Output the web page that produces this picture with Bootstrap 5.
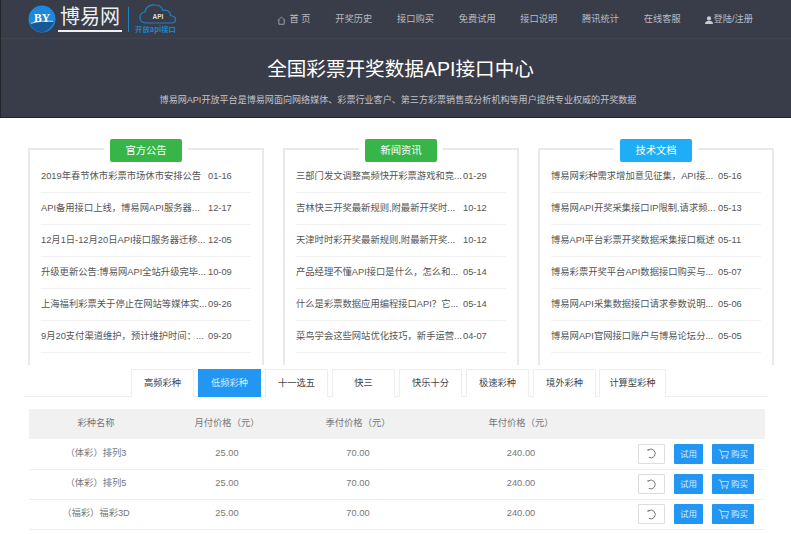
<!DOCTYPE html>
<html lang="zh"><head><meta charset="utf-8"><title>博易网API</title>
<link href="https://cdn.jsdelivr.net/npm/bootstrap@5.3.0/dist/css/bootstrap.min.css" rel="stylesheet">
<style>
html,body{height:534px;overflow:hidden;background:#fff}
body{font-family:"Liberation Sans","Noto Sans CJK SC",sans-serif;font-size:9.3px;color:#555}
.hero{height:118px;background:#393d49;border-bottom:1px solid #23252c;border-left:1px solid #23252c}
.topbar{height:39px;border-bottom:1px solid #41454f;padding:0 38px 0 27px}
.logo-cn{font-size:20px;line-height:20px;color:#eee;border-bottom:2px solid #eee;padding:0 2px 3px;margin-left:2px}
.logo-rule{width:1px;height:25px;background:#1e82c9;margin:0 6px}
.topnav a{color:#b8bbc2;text-decoration:none;font-size:9.25px;white-space:nowrap}
.topnav{gap:24.7px;margin-left:auto;padding-top:2px}
.hero-title{color:#fff;font-size:19.6px;line-height:24px;margin:18px 0 13px;padding-left:9px;font-weight:400}
.hero-sub{color:#c2c4c9;font-size:9.07px;line-height:12px;margin:0;padding-left:4px}
.panels{height:247px;overflow:hidden;padding:20px 17px 0 28px;gap:19px}
.panel{width:236px;height:240px;border:2px solid #e9e9e9;border-bottom:0;margin-top:10px;padding:0 11px;position:relative}
.panel-tag{position:absolute;top:-11px;left:80px;width:72px;height:23px;line-height:23px;border-radius:2px;text-align:center;color:#fff;font-size:10.3px;box-shadow:0 0 0 6px #fff}
.tag-green{background:#38b549}.tag-blue{background:#1eaef5}
.panel ul{margin:11px 0 0;padding:0;list-style:none}
.panel li{height:32px;padding-top:1px;border-bottom:1px solid #f1f1f1;display:flex;align-items:center;white-space:nowrap;color:#555}
.panel li span:first-child{width:167px;flex:none}
.panel li span:last-child{width:24px;flex:none}
.tabbar{margin:4px 23px 0 24px;height:28px;border-bottom:1px solid #eee;padding-left:107px;gap:4px;flex-wrap:nowrap}
.tabbar .nav-link{width:63px;height:28px;padding:0;line-height:27px;text-align:center;font-size:9.25px;color:#444;background:#fff;border:1px solid #eee;border-bottom:0;border-radius:0;margin:0}
.tabbar .nav-link.active{background:#2296f3;color:#d8ecff;border-color:#2296f3}
.tabbar .nav-item:nth-child(8) .nav-link{width:67px}
.tabbar .nav-item:nth-child(7) .nav-link{width:63px;margin-right:-1px}
.price-wrap{margin:12px 26px 0 29px}
.price{width:736px;margin:0;table-layout:fixed;font-size:9.3px}
.price th,.price td{height:30px;padding:0;text-align:center;vertical-align:middle;border-bottom:1px solid #eee;color:#777;font-weight:400;box-shadow:none;background:transparent}
.price thead th{background:#f1f1f1;border-bottom:0;color:#777}
.col-a{width:134px}.col-b{width:128px}.col-c{width:134px}.col-d{width:192px}
.ops{display:flex;justify-content:flex-end;align-items:center;padding-right:11px;gap:9px}
.btn-tiny{height:20px;padding:0;font-size:8.5px;line-height:18px;border-radius:1px;display:flex;align-items:center;justify-content:center;gap:2px}
.btn-re{width:27px;background:#fff;border:1px solid #ddd}
.btn-try{width:29px;background:#2296f3;color:#d8ecff;border:0}
.btn-buy{width:42px;background:#2296f3;color:#d8ecff;border:0}
</style></head><body>
<header class="hero text-center">
 <nav class="topbar d-flex align-items-center">
  <div class="d-flex align-items-center">
   <svg width="28" height="28" viewBox="0 0 29 29"><circle cx="14.500" cy="14.500" r="14" fill="#1e88dc"/><path d="M2 19c6-3 15-4 25-2-3 7-8 11-13 11-6 0-10-4-12-9z" fill="#155a96"/><path d="M3 19c7-2 15-3 23-2" stroke="#fff" stroke-width=".8" fill="none"/><text x="14.500" y="18" text-anchor="middle" font-family="Liberation Serif" font-weight="700" font-size="12" fill="#fff">BY</text></svg>
   <span class="logo-cn">博易网</span>
   <span class="logo-rule"></span>
   <svg width="46" height="30" viewBox="0 0 46 30"><path d="M11 19c-4 0-6-2.500-6-5.500 0-3 2-5 5-5.500 1-5 5-7.500 10-7 4 0 7 2 8 5.500 1-.5 2.500-.5 4 0 2.500 1 3.500 3 3.500 5 3 .5 5 2 5 4 0 2.500-2 3.500-4 3.500z" fill="none" stroke="#1e82c9" stroke-width="1.200"/><text x="23" y="15" text-anchor="middle" font-family="Liberation Sans" font-weight="700" font-size="6.500" fill="#ddd">API</text><text x="0" y="28" font-family="Noto Sans CJK SC" font-weight="700" font-size="7.400" fill="#1e82c9">开放api接口</text></svg>
  </div>
  <div class="topnav d-flex align-items-center">
   <a href="#" class="d-flex align-items-center gap-1"><svg width="9" height="9" viewBox="0 0 12 12" fill="none" stroke="#b8bbc2"><path d="M1 6l5-4.500L11 6M2.500 5v6h7V5"/></svg>首 页</a>
   <a href="#">开奖历史</a><a href="#">接口购买</a><a href="#">免费试用</a><a href="#">接口说明</a><a href="#">腾讯统计</a><a href="#">在线客服</a>
   <a href="#" class="d-flex align-items-center"><svg width="8" height="8" viewBox="0 0 10 10" fill="#c8cad0"><circle cx="5" cy="3" r="2.600"/><path d="M0 10c0-3 2-4 5-4s5 1 5 4z"/></svg>登陆/注册</a>
  </div>
 </nav>
 <h1 class="hero-title">全国彩票开奖数据API接口中心</h1>
 <p class="hero-sub">博易网API开放平台是博易网面向网络媒体、彩票行业客户、第三方彩票销售或分析机构等用户提供专业权威的开奖数据</p>
</header>
<section class="panels d-flex">
 <div class="panel"><div class="panel-tag tag-green">官方公告</div><ul>
  <li><span>2019年春节休市彩票市场休市安排公告</span><span>01-16</span></li>
  <li><span>API备用接口上线，博易网API服务器...</span><span>12-17</span></li>
  <li><span>12月1日-12月20日API接口服务器迁移...</span><span>12-05</span></li>
  <li><span>升级更新公告:博易网API全站升级完毕...</span><span>10-09</span></li>
  <li><span>上海福利彩票关于停止在网站等媒体实...</span><span>09-26</span></li>
  <li><span>9月20支付渠道维护，预计维护时间：...</span><span>09-20</span></li>
 </ul></div>
 <div class="panel"><div class="panel-tag tag-green">新闻资讯</div><ul>
  <li><span>三部门发文调整高频快开彩票游戏和竞...</span><span>01-29</span></li>
  <li><span>吉林快三开奖最新规则,附最新开奖时...</span><span>10-12</span></li>
  <li><span>天津时时彩开奖最新规则,附最新开奖...</span><span>10-12</span></li>
  <li><span>产品经理不懂API接口是什么，怎么和...</span><span>05-14</span></li>
  <li><span>什么是彩票数据应用编程接口API？它...</span><span>05-14</span></li>
  <li><span>菜鸟学会这些网站优化技巧，新手运营...</span><span>04-07</span></li>
 </ul></div>
 <div class="panel"><div class="panel-tag tag-blue">技术文档</div><ul>
  <li><span>博易网彩种需求增加意见征集，API接...</span><span>05-16</span></li>
  <li><span>博易网API开奖采集接口IP限制,请求频...</span><span>05-13</span></li>
  <li><span>博易API平台彩票开奖数据采集接口概述</span><span>05-11</span></li>
  <li><span>博易彩票开奖平台API数据接口购买与...</span><span>05-07</span></li>
  <li><span>博易网API采集数据接口请求参数说明...</span><span>05-06</span></li>
  <li><span>博易网API官网接口账户与博易论坛分...</span><span>05-05</span></li>
 </ul></div>
</section>
<ul class="nav tabbar">
 <li class="nav-item"><a class="nav-link" href="#">高频彩种</a></li>
 <li class="nav-item"><a class="nav-link active" href="#">低频彩种</a></li>
 <li class="nav-item"><a class="nav-link" href="#">十一选五</a></li>
 <li class="nav-item"><a class="nav-link" href="#">快三</a></li>
 <li class="nav-item"><a class="nav-link" href="#">快乐十分</a></li>
 <li class="nav-item"><a class="nav-link" href="#">极速彩种</a></li>
 <li class="nav-item"><a class="nav-link" href="#">境外彩种</a></li>
 <li class="nav-item"><a class="nav-link" href="#">计算型彩种</a></li>
</ul>
<div class="price-wrap">
<table class="table price">
 <colgroup><col class="col-a"><col class="col-b"><col class="col-c"><col class="col-d"><col></colgroup>
 <thead><tr><th>彩种名称</th><th>月付价格（元）</th><th>季付价格（元）</th><th>年付价格（元）</th><th></th></tr></thead>
 <tbody>
  <tr><td>（体彩）排列3</td><td>25.00</td><td>70.00</td><td>240.00</td><td><div class="ops"><button class="btn btn-tiny btn-re"><svg width="11" height="11" viewBox="0 0 10 10" fill="none" stroke="#666" stroke-width=".8"><path d="M2 1.800A4 4 0 1 1 2.500 8.500"/><path d="M1 1.800h2"/></svg></button><button class="btn btn-tiny btn-try">试用</button><button class="btn btn-tiny btn-buy"><svg width="11" height="10" viewBox="0 0 11 10" fill="none" stroke="#d8ecff" stroke-width=".8"><path d="M.5 1h2l1.500 6h5.500l1-4.500H3"/><circle cx="4.500" cy="8.800" r=".7"/><circle cx="8.800" cy="8.800" r=".7"/></svg>购买</button></div></td></tr>
  <tr><td>（体彩）排列5</td><td>25.00</td><td>70.00</td><td>240.00</td><td><div class="ops"><button class="btn btn-tiny btn-re"><svg width="11" height="11" viewBox="0 0 10 10" fill="none" stroke="#666" stroke-width=".8"><path d="M2 1.800A4 4 0 1 1 2.500 8.500"/><path d="M1 1.800h2"/></svg></button><button class="btn btn-tiny btn-try">试用</button><button class="btn btn-tiny btn-buy"><svg width="11" height="10" viewBox="0 0 11 10" fill="none" stroke="#d8ecff" stroke-width=".8"><path d="M.5 1h2l1.500 6h5.500l1-4.500H3"/><circle cx="4.500" cy="8.800" r=".7"/><circle cx="8.800" cy="8.800" r=".7"/></svg>购买</button></div></td></tr>
  <tr><td>（福彩）福彩3D</td><td>25.00</td><td>70.00</td><td>240.00</td><td><div class="ops"><button class="btn btn-tiny btn-re"><svg width="11" height="11" viewBox="0 0 10 10" fill="none" stroke="#666" stroke-width=".8"><path d="M2 1.800A4 4 0 1 1 2.500 8.500"/><path d="M1 1.800h2"/></svg></button><button class="btn btn-tiny btn-try">试用</button><button class="btn btn-tiny btn-buy"><svg width="11" height="10" viewBox="0 0 11 10" fill="none" stroke="#d8ecff" stroke-width=".8"><path d="M.5 1h2l1.500 6h5.500l1-4.500H3"/><circle cx="4.500" cy="8.800" r=".7"/><circle cx="8.800" cy="8.800" r=".7"/></svg>购买</button></div></td></tr>
  <tr><td></td><td></td><td></td><td></td><td><div class="ops"><span class="btn btn-tiny btn-re"></span><span class="btn btn-tiny btn-try"></span><span class="btn btn-tiny btn-buy"></span></div></td></tr>
 </tbody>
</table>
</div>
</body></html>
